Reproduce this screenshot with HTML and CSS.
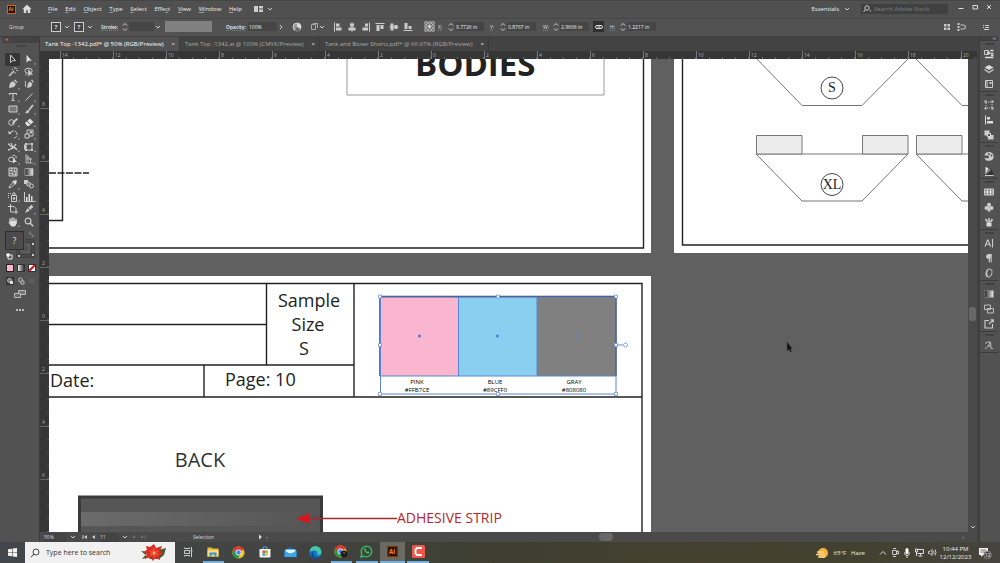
FILE: index.html
```html
<!DOCTYPE html>
<html lang="en">
<head>
<meta charset="utf-8">
<title>Tank Top -1342.pdf</title>
<link rel="stylesheet" href="styles.css">
</head>
<body>
<svg class="defs" aria-hidden="true">
  <symbol id="chev" viewBox="0 0 6 6"><path d="M1 2l2 2 2-2" fill="none" stroke="#ccc"/></symbol>
  <symbol id="step" viewBox="0 0 6 10"><path d="M1 3.5l2-2 2 2M1 6.5l2 2 2-2" fill="none" stroke="#ccc"/></symbol>
  <symbol id="chrome" viewBox="0 0 14 14"><circle cx="7" cy="7" r="6.5" fill="#fbc116"/><path d="M7 7L1.4 3.7A6.5 6.5 0 0 1 12.6 3.7z" fill="#e33b2e"/><path d="M7 7L1.4 3.7A6.5 6.5 0 0 0 6.6 13.5L9 9z" fill="#279847"/><path d="M7 4h5.8l-.2-.4A6.5 6.5 0 0 0 1.4 3.7L4.2 8z" fill="#e33b2e"/><circle cx="7" cy="7" r="3.1" fill="#fff"/><circle cx="7" cy="7" r="2.4" fill="#4285f4"/></symbol>
</svg>
<div class="app">
  <header class="menubar">
    <svg class="ai" viewBox="0 0 9 9"><rect x=".5" y=".5" width="8" height="8" fill="#2b0f00" stroke="#d1641c"/><text x="1.6" y="6.4" class="ai-text">Ai</text></svg>
    <button class="home" aria-label="Home"><svg width="10" height="10" viewBox="0 0 10 10"><path d="M5 .8L.4 5h1.4v4h2.4V6.3h1.6V9h2.4V5h1.4z" fill="#ddd"/></svg></button>
    <nav class="menus">
      <button><u>F</u>ile</button><button><u>E</u>dit</button><button><u>O</u>bject</button><button><u>T</u>ype</button><button><u>S</u>elect</button><button>Effe<u>c</u>t</button><button><u>V</u>iew</button><button><u>W</u>indow</button><button><u>H</u>elp</button>
    </nav>
    <button class="arrange" aria-label="Arrange documents"><svg width="9" height="6" viewBox="0 0 9 6"><path d="M0 0h4v6H0zM5 0h4v2.5H5zM5 3.5h4V6H5z" fill="#ccc"/></svg><svg width="6" height="6"><use href="#chev"/></svg></button>
    <span class="grow"></span>
    <button class="essentials">Essentials <svg width="6" height="6"><use href="#chev"/></svg></button>
    <label class="stock"><svg width="9" height="8" viewBox="0 0 9 8"><circle cx="4" cy="3" r="2.2" fill="none" stroke="#ccc"/><path d="M2.4 4.6L.6 7" stroke="#ccc"/><path d="M6.5 5.5h2l-1 1.2z" fill="#ccc"/></svg><input type="text" placeholder="Search Adobe Stock" aria-label="Search Adobe Stock"></label>
    <div class="winbtns">
      <button aria-label="Minimize"><svg width="8" height="8" viewBox="0 0 8 8"><path d="M1.500 5.500h5" stroke="#ddd"/></svg></button>
      <button aria-label="Maximize"><svg width="8" height="8" viewBox="0 0 8 8"><path d="M2 2.500h4.500v3.500H2z" fill="none" stroke="#ddd"/></svg></button>
      <button aria-label="Close"><svg width="8" height="8" viewBox="0 0 8 8"><path d="M2 2l4 4M6 2L2 6" stroke="#ddd"/></svg></button>
    </div>
  </header>

  <div class="control">
    <span>Group</span>
    <button class="q"><b>?</b><svg width="6" height="6"><use href="#chev"/></svg></button>
    <button class="q"><b>?</b><svg width="6" height="6"><use href="#chev"/></svg></button>
    <label for="stroke" class="dot strong">Stroke:</label>
    <div class="num"><svg width="6" height="10"><use href="#step"/></svg><input id="stroke" type="text" value=""><svg width="6" height="6"><use href="#chev"/></svg></div>
    <div class="profile"></div>
    <label for="op" class="dot strong">Opacity:</label>
    <div class="num"><input id="op" type="text" value="100%"><svg width="6" height="6" viewBox="0 0 6 6"><path d="M2 1l2 2-2 2" fill="none" stroke="#ccc"/></svg></div>
    <button aria-label="Recolor"><svg width="10" height="10" viewBox="0 0 10 10"><circle cx="5" cy="5" r="4" fill="#999" stroke="#ccc"/><path d="M5 5V1a4 4 0 0 1 3.500 6z" fill="#ddd"/><path d="M5 5l3.500 2A4 4 0 0 1 3 8.500z" fill="#666"/></svg></button>
    <button class="pair" aria-label="Align to"><svg width="8" height="8" viewBox="0 0 8 8"><path d="M1.500 1.500h4v5h-4zM3 .5h4.500V5" fill="none" stroke="#aaa"/></svg><svg width="6" height="6"><use href="#chev"/></svg></button>
    <div class="aligns">
      <button aria-label="Align left"><svg width="10" height="10" viewBox="0 0 10 10"><path d="M1 .5h1v9H1zM3 1.500h3.500v3H3zM3 5.500h5.500v3H3z" fill="#ccc"/></svg></button>
      <button aria-label="Align center"><svg width="10" height="10" viewBox="0 0 10 10"><path d="M4.500.5h1v9h-1zM3 1.500h4v3H3zM1.500 5.500h7v3h-7z" fill="#ccc"/></svg></button>
      <button aria-label="Align right"><svg width="10" height="10" viewBox="0 0 10 10"><path d="M8 .5h1v9H8zM4 1.500h3v3H4zM1.500 5.500H7v3H1.500z" fill="#ccc"/></svg></button>
      <button aria-label="Align top"><svg width="10" height="10" viewBox="0 0 10 10"><path d="M.5 1h9v1h-9zM1.500 3h3v6h-3zM5.500 3h3v4h-3z" fill="#ccc"/></svg></button>
      <button aria-label="Align middle"><svg width="10" height="10" viewBox="0 0 10 10"><path d="M.5 4.500h9v1h-9zM1.500 1.500h3v7h-3zM5.500 3h3v4h-3z" fill="#ccc"/></svg></button>
      <button aria-label="Align bottom"><svg width="10" height="10" viewBox="0 0 10 10"><path d="M.5 8h9v1h-9zM1.500 1h3v6h-3zM5.500 4h3v3h-3z" fill="#ccc"/></svg></button>
    </div>
    <button aria-label="Reference point"><svg width="11" height="11" viewBox="0 0 11 11"><path d="M2 2h7v7H2z" fill="none" stroke="#999" stroke-width=".8"/><path d="M.8.8h2.400v2.400H.8zM4.300.8h2.400v2.400H4.300zM7.800.8h2.400v2.400H7.800zM.8 4.300h2.400v2.400H.8zM7.800 4.300h2.400v2.400H7.800zM.8 7.800h2.400v2.400H.8zM4.300 7.800h2.400v2.400H4.300zM7.800 7.800h2.400v2.400H7.800z" fill="#525252" stroke="#ccc" stroke-width=".8"/><path d="M4.300 4.300h2.400v2.400H4.300z" fill="#fff"/></svg></button>
    <div class="num"><label for="x" class="dot">X:</label><svg width="6" height="10"><use href="#step"/></svg><input id="x" type="text" value="9.7726 in"></div>
    <div class="num"><label for="y" class="dot">Y:</label><svg width="6" height="10"><use href="#step"/></svg><input id="y" type="text" value="0.8767 in"></div>
    <div class="num"><label for="w" class="dot">W:</label><svg width="6" height="10"><use href="#step"/></svg><input id="w" type="text" value="2.9606 in"></div>
    <button class="link" aria-label="Constrain proportions"><svg width="8" height="4" viewBox="0 0 8 4"><rect x=".5" y=".5" width="7" height="3" rx="1.500" fill="none" stroke="#ddd"/><path d="M2.500 2h3" stroke="#ddd"/></svg></button>
    <div class="num"><label for="h" class="dot">H:</label><svg width="6" height="10"><use href="#step"/></svg><input id="h" type="text" value="1.2217 in"></div>
    <span></span>
    <div class="ctrl-right">
      <button aria-label="Isolate"><svg width="8" height="8" viewBox="0 0 8 8"><path d="M1 1h2.500v2.500H1zM4.500 1H7v2.500H4.500zM1 4.500h2.500V7H1zM4.500 4.500H7V7H4.500z" fill="#ccc"/></svg></button>
      <button aria-label="Snap"><svg width="9" height="8" viewBox="0 0 9 8"><path d="M1.500 0v8" stroke="#ccc" stroke-width="2" stroke-dasharray="2 1"/><path d="M3.500 2h3a2 2 0 0 1 0 4h-3" fill="none" stroke="#ccc"/></svg></button>
      <button aria-label="Panel menu"><svg width="8" height="8" viewBox="0 0 8 8"><path d="M1 2.500h1M3 2.500h4M1 4.500h1M3 4.500h4M2 6.500h5" stroke="#ccc"/></svg></button>
    </div>
  </div>

  <main class="work">
    <aside class="tools">
      <div class="tools-head">‹‹</div>
      <div class="grip"></div>
      <div class="tool-grid">
        <button class="on" aria-label="Selection"><svg viewBox="0 0 10 10"><path d="M2.500 1v7.500l2-1.800h3z" fill="none" stroke="#ccc"/></svg></button>
        <button class="more" aria-label="Direct selection"><svg viewBox="0 0 10 10"><path d="M2.500.8v8l2-2h3.300z" fill="#ddd"/></svg></button>
        <button aria-label="Magic wand"><svg viewBox="0 0 10 10"><path d="M1 9l5-5" stroke="#ccc" stroke-width="1.400"/><path d="M7 0v2M7 5v1.500M4 2l1 1M8.500 3.500H10M9 1l-.8.8" stroke="#ccc"/></svg></button>
        <button aria-label="Lasso"><svg viewBox="0 0 10 10"><ellipse cx="4.500" cy="3.800" rx="3.700" ry="2.600" fill="none" stroke="#ccc"/><path d="M4.500 2.500v6.500l1.600-1.500h2.400zM2 6v3" fill="#ccc" stroke="#ccc" stroke-width=".6"/></svg></button>
        <button class="more" aria-label="Pen"><svg viewBox="0 0 10 10"><path d="M1 9l1-5 3-2 3 3-2 3zM6 1.500L7 .5l2.500 2.500-1 1z" fill="#ccc"/></svg></button>
        <button aria-label="Curvature"><svg viewBox="0 0 10 10"><path d="M3 9l1-5 2-1.500 2.500 2.500L7 8zM7 1.500l1-1L9.800 3l-.8.800z" fill="#ccc"/><path d="M1 2c2 1-1 4 1 6" fill="none" stroke="#ccc"/></svg></button>
        <button class="more" aria-label="Type"><svg viewBox="0 0 10 10"><path d="M1.500 3V1.500h7V3M5 1.500v7M3.500 8.500h3" fill="none" stroke="#ccc" stroke-width="1.100"/></svg></button>
        <button class="more" aria-label="Line"><svg viewBox="0 0 10 10"><path d="M1.500 8.500l7-7" stroke="#ccc"/></svg></button>
        <button class="more" aria-label="Rectangle"><svg viewBox="0 0 10 10"><path d="M1 2h8v6H1z" fill="#777" stroke="#ccc"/></svg></button>
        <button class="more" aria-label="Paintbrush"><svg viewBox="0 0 10 10"><path d="M9 1L5 6" stroke="#ccc" stroke-width="1.800"/><path d="M1 9c2-1 1-3 3-3l1.300 1c0 2-2 2.500-4.300 2z" fill="#ccc"/></svg></button>
        <button class="more" aria-label="Shaper"><svg viewBox="0 0 10 10"><circle cx="3.500" cy="5.500" r="2.800" fill="none" stroke="#ccc"/><path d="M4 7l.5-1.800L8.500 1 10 2.300 5.800 6.500z" fill="#ccc"/></svg></button>
        <button class="more" aria-label="Eraser"><svg viewBox="0 0 10 10"><path d="M1 6l5-4.500L9.500 5 5 9H3z" fill="#ddd"/><path d="M3 4l3.500 3.500" stroke="#666"/></svg></button>
        <button class="more" aria-label="Rotate"><svg viewBox="0 0 10 10"><path d="M2 4.500A3.600 3.600 0 1 1 6 9" fill="none" stroke="#ccc" stroke-dasharray="5 1"/><path d="M0 2l1 3.500L4 4z" fill="#ccc"/></svg></button>
        <button class="more" aria-label="Scale"><svg viewBox="0 0 10 10"><path d="M1 5h4v4H1zM3 5V1h6v6H5M5 5l2.500-2.500M5.500 2.500h2v2" fill="none" stroke="#ccc"/></svg></button>
        <button class="more" aria-label="Width"><svg viewBox="0 0 10 10"><path d="M0 2c2 0 2 3 4 3s3 0 5 3M0 8c2 0 4-2 5-2M3 1l2 5 3-4" fill="none" stroke="#ccc" stroke-width="1.300"/></svg></button>
        <button class="more" aria-label="Free transform"><svg viewBox="0 0 10 10"><path d="M2 2h6v6H2z" fill="none" stroke="#ccc"/><path d="M1 1h2v2H1zM7 1h2v2H7zM7 7h2v2H7zM1 7h2v2H1zM0 2v6l3-3z" fill="#ccc"/></svg></button>
        <button class="more" aria-label="Shape builder"><svg viewBox="0 0 10 10"><ellipse cx="3.500" cy="5.500" rx="3" ry="2.200" fill="none" stroke="#ccc"/><path d="M4 2.500a2 2 0 0 1 4 2" fill="none" stroke="#ccc"/><path d="M5 4v5.500l1.500-1.500H9z" fill="#ddd"/></svg></button>
        <button class="more" aria-label="Perspective grid"><svg viewBox="0 0 10 10"><path d="M2 0v9h7M2 2l5 3M2 5h6M4 1.500V9M6.500 4v5" fill="none" stroke="#bbb" stroke-width=".9"/></svg></button>
        <button aria-label="Mesh"><svg viewBox="0 0 10 10"><path d="M1 1h8v8H1z" fill="#666" stroke="#ccc"/><path d="M1 4c3-2 5 2 8 0M1 7c3-2 5 2 8 0M4 1c-2 3 2 5 0 8M7 1c-2 3 2 5 0 8" fill="none" stroke="#ccc" stroke-width=".8"/></svg></button>
        <button aria-label="Gradient"><svg viewBox="0 0 10 10"><defs><linearGradient id="g"><stop stop-color="#222"/><stop offset="1" stop-color="#eee"/></linearGradient></defs><path d="M1 1.500h8v7H1z" fill="url(#g)" stroke="#bbb" stroke-width=".7"/></svg></button>
        <button class="more" aria-label="Eyedropper"><svg viewBox="0 0 10 10"><path d="M1 9l1-2.500L5.500 3 7 4.500 3.500 8z" fill="none" stroke="#ccc"/><path d="M5 2l3 3M6.500 3.500l2-2" stroke="#ddd" stroke-width="1.900"/></svg></button>
        <button aria-label="Blend"><svg viewBox="0 0 10 10"><path d="M0 1h4v4H0z" fill="#ccc"/><circle cx="4.500" cy="5" r="2" fill="#777" stroke="#ccc"/><circle cx="7.500" cy="7" r="2" fill="#555" stroke="#ccc"/></svg></button>
        <button class="more" aria-label="Symbol sprayer"><svg viewBox="0 0 10 10"><path d="M3.500 3.500h5v6h-5zM5 3V1h2v2" fill="none" stroke="#ccc"/><path d="M0 1h1v1H0zM2 1h1v1H2zM0 3h1v1H0zM0 5h1v1H0z" fill="#ccc"/><circle cx="6" cy="6.500" r="1.300" fill="#ccc"/></svg></button>
        <button class="more" aria-label="Column graph"><svg viewBox="0 0 10 10"><path d="M.5 0v9.500H10" fill="none" stroke="#ccc"/><path d="M2 5h1.500v4H2zM4.500 2H6v7H4.500zM7 4h1.500v5H7z" fill="#ddd"/></svg></button>
        <button aria-label="Artboard"><svg viewBox="0 0 10 10"><path d="M2.500 0v8H10M0 2.500h6L8 4.500V10" fill="none" stroke="#ccc"/></svg></button>
        <button class="more" aria-label="Slice"><svg viewBox="0 0 10 10"><path d="M1 9l2-4L7.500.8 9.300 3 5 7z" fill="#ccc"/><path d="M4 4l2 2" stroke="#555"/></svg></button>
        <button class="more" aria-label="Hand"><svg viewBox="0 0 10 10"><path d="M2 5V2M4 5V1M6 5V1.200M8 5.500V2.500" stroke="#ddd" stroke-width="1.300" stroke-linecap="round"/><path d="M0 5l2 .8V4h6.700v2.500L7 9.500H3.500z" fill="#ddd"/></svg></button>
        <button aria-label="Zoom"><svg viewBox="0 0 10 10"><circle cx="4" cy="4" r="2.900" fill="none" stroke="#ccc" stroke-width="1.200"/><path d="M6 6l3.200 3.200" stroke="#ccc" stroke-width="1.500"/></svg></button>
      </div>
      <svg class="fillstroke" viewBox="0 0 36 30"><path d="M16 14v12h15V11h-8" fill="none" stroke="#333" stroke-width="3"/><path d="M16 14v12h15V11h-8M20 17v5h7v-7h-4" fill="none" stroke="#777" stroke-width=".7"/><rect x="3.500" y="1.500" width="18" height="18" fill="#4b4b4b" stroke="#303030"/><text x="12.500" y="14">?</text><path d="M27 3q4 0 4 4M29 1.500L27 3l2 1.500M29.500 5.500L31 7l1.500-1.500" fill="none" stroke="#888" stroke-width=".8"/><path d="M30 13h2v2h-2zM30 24h2v2h-2zM16 25h2v2h-2z" fill="#ccc"/><rect x="4" y="23" width="4" height="4" fill="#fff" stroke="#222" stroke-width=".6"/><path d="M6 25h4v4H6z" fill="none" stroke="#eee"/></svg>
      <div class="modes">
        <button class="pinkbtn" aria-label="Color"></button><button class="gradbtn" aria-label="Gradient fill"></button><button class="nonebtn" aria-label="None"></button>
        <button class="on" aria-label="Draw normal"><svg viewBox="0 0 8 8"><circle cx="3.500" cy="3.500" r="2" fill="#777" stroke="#bbb"/><path d="M4 4h3v3H4z" fill="#ddd"/></svg></button>
        <button aria-label="Draw behind"><svg viewBox="0 0 8 8"><circle cx="3.500" cy="3" r="2" fill="none" stroke="#bbb"/><path d="M4 4h3v3H4z" fill="#555" stroke="#bbb"/></svg></button>
        <button aria-label="Draw inside"><svg viewBox="0 0 8 8"><circle cx="4" cy="4" r="2" fill="#5c5c5c" stroke="#666"/></svg></button>
      </div>
      <button class="screen" aria-label="Screen mode"><svg width="12" height="10" viewBox="0 0 12 10"><path d="M4.500 1.500h7v4h-7z" fill="#777" stroke="#bbb"/><path d="M.5 4.500h6v4h-6z" fill="#666" stroke="#bbb"/></svg></button>
      <button class="dots" aria-label="Edit toolbar"><svg width="10" height="4" viewBox="0 0 10 4"><path d="M1 1h2v2H1zM4 1h2v2H4zM7 1h2v2H7z" fill="#bbb"/></svg></button>
    </aside>

    <section class="document">
      <div class="tabs">
        <div class="tab active"><button>Tank Top -1342.pdf* @ 50% (RGB/Preview)</button><button class="x" aria-label="Close tab">×</button></div>
        <div class="tab"><button>Tank Top -1342.ai @ 100% (CMYK/Preview)</button><button class="x" aria-label="Close tab">×</button></div>
        <div class="tab"><button>Tank and Boxer Shorts.pdf* @ 66.67% (RGB/Preview)</button><button class="x" aria-label="Close tab">×</button></div>
      </div>
      <div class="view">
        <div class="hruler"><span>14</span><span>12</span><span>10</span><span>8</span><span>6</span><span>4</span><span>2</span><span>0</span><span>2</span><span>4</span><span>6</span><span>8</span><span>10</span><span>12</span><span>14</span><span>16</span><span>18</span><span>20</span></div>
        <div class="vruler"><span class="first">8</span><span>6</span><span>4</span><span>2</span><span>0</span><span>2</span><span>4</span><span>6</span><span></span></div>
        <div class="canvas">
          <svg class="art" width="919" height="473" viewBox="49 59 919 473">
            <defs><linearGradient id="strip" x1="0" x2="1" y1="0" y2="0"><stop stop-color="#6b6b6b"/><stop offset="1" stop-color="#555"/></linearGradient></defs>
            <path d="M0 0h651v253H0zM674 0h400v253H674zM0 276h651v300H0z" fill="#fff"/>
            <g fill="none" stroke="#222" stroke-width="1.400">
              <path d="M643.500 50v198H40M40 220.500h22.500V50"/>
              <path d="M49 173h40" stroke-dasharray="7 1.500"/>
              <path d="M682.500 50v195H980"/>
              <path d="M40 283.500h602V540M40 397h602M40 324.500h226M40 365h314M266.500 283v82M354 283v114M204 365v32"/>
            </g>
            <path d="M347 50v45h257V50" fill="none" stroke="#999"/>
            <text x="415" y="76" class="bodies">BODIES</text>
            <g fill="none" stroke="#777">
              <path d="M755 57l47 48.500h60L910 57M914 57l48 48.500h20M756 154l46 47h60l46-47zM916 154h70M916 154l46 47h20"/>
              <path d="M756.500 135.500H802V154h-45.500zM862.500 135.500H908V154h-45.500zM916.500 135.500H962V154h-45.500z" fill="#ececec"/>
              <g stroke="#444"><circle cx="832" cy="88" r="11"/><circle cx="832" cy="184.500" r="11"/></g>
            </g>
            <text x="832" y="92" class="serif">S</text>
            <text x="832" y="189" class="serif">XL</text>
            <g class="myriad">
              <text x="309" y="307" class="mid">Sample</text><text x="308" y="331" class="mid">Size</text><text x="304" y="355" class="mid">S</text>
              <text x="50" y="387">Date:</text><text x="225" y="386">Page: 10</text>
            </g>
            <text x="200" y="467" class="back mid">BACK</text>
            <rect x="79.500" y="497" width="242" height="60" fill="#565656" stroke="#3a3a3a" stroke-width="3"/>
            <path d="M81 512h239v14H81z" fill="url(#strip)"/>
            <path d="M305 518.500h92" stroke="#a5282c" stroke-width="1.300"/><path d="M296 518.500l13-5v10z" fill="#d8141c"/>
            <text x="397" y="523" class="adhesive">ADHESIVE STRIP</text>
            <path d="M380 297h78.500v79H380z" fill="#f9b6ce"/><path d="M458.500 297H537v79h-78.500z" fill="#89cff0"/><path d="M537 297h79v79h-79z" fill="#808080"/>
            <path d="M380 376v-79.500h236V376" fill="none" stroke="#445" stroke-width="1.500"/>
            <path d="M380.500 297h235.500v97H380.500zM380 376h236M458.500 297v79M537 297v79M616 345h7" fill="none" stroke="#5b85d6"/>
            <g class="swname"><text x="417" y="384">PINK</text><text x="417" y="392">#FFB7CE</text><text x="495" y="384">BLUE</text><text x="495" y="392">#89CFF0</text><text x="574" y="384">GRAY</text><text x="574" y="392">#808080</text></g>
            <g fill="#fff" stroke="#6f93d8" stroke-width=".8"><path d="M378.500 295h3v3h-3zM496.500 295h3v3h-3zM614.500 295h3v3h-3zM378.500 343.500h3v3h-3zM614.500 343.500h3v3h-3zM378.500 392.500h3v3h-3zM496.500 392.500h3v3h-3zM614.500 392.500h3v3h-3z"/><circle cx="625.500" cy="345" r="2"/></g>
            <g fill="#4a7bd6"><circle cx="419.500" cy="336" r="1.500"/><circle cx="497.500" cy="336" r="1.500"/><circle cx="576.500" cy="336" r="1.200"/></g>
            <path d="M787 342v9l2-1.700 1.300 2.700 1.300-.7-1.200-2.600h2z" fill="#111" stroke="#444" stroke-width=".4"/>
          </svg>
        </div>
        <div class="vscroll"><i></i><svg width="6" height="6"><use href="#chev"/></svg></div>
        <div class="status">
          <input class="zoomv" type="text" value="50%" aria-label="Zoom"><svg width="6" height="6"><use href="#chev"/></svg>
          <button class="first-board" aria-label="First artboard"><svg width="6" height="6" viewBox="0 0 6 6"><path d="M1 1v4" stroke="#ccc"/><path d="M5 1v4L2 3z" fill="#ccc"/></svg></button>
          <button aria-label="Previous artboard"><svg width="6" height="6" viewBox="0 0 6 6"><path d="M4 1v4L1 3z" fill="#ccc"/></svg></button>
          <input class="board" type="text" value="11" aria-label="Artboard"><svg width="6" height="6"><use href="#chev"/></svg>
          <button aria-label="Next artboard"><svg width="6" height="6" viewBox="0 0 6 6"><path d="M2 1v4l3-2z" fill="#686868"/></svg></button>
          <button aria-label="Last artboard"><svg width="6" height="6" viewBox="0 0 6 6"><path d="M1 1v4l3-2zM4.500 1h1v4h-1z" fill="#686868"/></svg></button>
          <span class="toolname">Selection</span>
          <button aria-label="Status menu"><svg width="6" height="6" viewBox="0 0 6 6"><path d="M2 .5v5L5 3z" fill="#ddd"/></svg></button>
          <div class="hscroll"><span>‹</span><i></i><span>›</span></div>
        </div>
      </div>
    </section>

    <aside class="dock">
      <div class="dock-head">‹‹</div>
      <div class="dgroup">
        <button aria-label="Properties"><svg viewBox="0 0 10 10"><path d="M.5 1.500h4v4h-4z" fill="none" stroke="#ccc"/><circle cx="4.500" cy="4" r="1.800" fill="#ccc"/><path d="M6.500 1.500h3M6.500 4.500h3M1 8.500h8.500M7 6.500h2.500" stroke="#ddd" stroke-width="1.300"/></svg></button>
        <button aria-label="Layers"><svg viewBox="0 0 10 10"><path d="M5 1l4.500 2.500L5 6 .5 3.500z" fill="#ddd"/><path d="M.5 5.500L5 8.500l4.500-3" fill="none" stroke="#ccc" stroke-width="1.300"/></svg></button>
        <button aria-label="Libraries"><svg viewBox="0 0 10 10"><path d="M1.500 1.500h7v7h-7zM3 1.500v7" fill="none" stroke="#ccc"/><path d="M5.500 3h2v2h-2z" fill="#ccc"/></svg></button>
      </div>
      <div class="dgroup">
        <button aria-label="Transform"><svg viewBox="0 0 10 10"><path d="M2 2h6v6H2z" fill="none" stroke="#ccc" stroke-dasharray="1 1"/><path d="M.5.5h2v2h-2zM7.500.5h2v2h-2zM.5 7.500h2v2h-2zM7.500 7.500h2v2h-2z" fill="#ccc"/></svg></button>
        <button aria-label="Align"><svg viewBox="0 0 10 10"><path d="M1 .5h1v9H1zM3 2h3v2.500H3zM3 6h6v2.500H3z" fill="#ddd"/></svg></button>
        <button aria-label="Pathfinder"><svg viewBox="0 0 10 10"><path d="M.5.5h5v5h-5zM5 5h4.500v4.500H4V5z" fill="#ccc"/><path d="M3.500 3.500h3v3h-3z" fill="#555" stroke="#ddd"/></svg></button>
      </div>
      <div class="dgroup">
        <button aria-label="Color"><svg viewBox="0 0 10 10"><path d="M.5 4.500h2.500a2 1.300 0 0 1 2 1.500q0 1.500-2 1.200L.5 7a4.600 3.800 0 0 0 9-1.500A4.500 4 0 0 0 .5 4.500z" fill="#ccc"/><circle cx="5" cy="3" r=".9" fill="#444"/><circle cx="7.500" cy="4.500" r=".9" fill="#444"/></svg></button>
        <button aria-label="Color guide"><svg viewBox="0 0 10 10"><path d="M1.500 9V1a8 8 0 0 1 8 8z" fill="#333"/><path d="M1.500 9V1l3 1z" fill="#eee"/><path d="M1.500 9l3-7L7 4z" fill="#888"/><path d="M1 9.500h8.500" stroke="#ccc"/></svg></button>
      </div>
      <div class="dgroup">
        <button aria-label="Swatches"><svg viewBox="0 0 10 10"><path d="M.5 2h9v6h-9z" fill="#888" stroke="#ccc"/><path d="M3.500 2v6M6.500 2v6M1 5h8" stroke="#ddd"/></svg></button>
        <button aria-label="Symbols"><svg viewBox="0 0 10 10"><circle cx="5" cy="2.700" r="2" fill="#ccc"/><circle cx="2.500" cy="6" r="2" fill="#ccc"/><circle cx="7.500" cy="6" r="2" fill="#ccc"/><path d="M4.500 4h1l1 5.500h-3z" fill="#ccc"/></svg></button>
        <button aria-label="Brushes"><svg viewBox="0 0 10 10"><path d="M2.500 5.500h5v4h-5z" fill="#ddd"/><path d="M5 6V1M3.500 5L1.500 2M6.500 5l2-3" stroke="#ccc" stroke-width="1.600"/></svg></button>
      </div>
      <div class="dgroup">
        <button aria-label="Character"><svg viewBox="0 0 10 10"><path d="M1 8.500L3.500 2h.6l2.400 6.500M2 6.200h3.600M8.500 1v8.500" fill="none" stroke="#ccc" stroke-width="1.100"/></svg></button>
        <button aria-label="Paragraph"><svg viewBox="0 0 10 10"><path d="M7.500 1.500H4.500a2 2 0 0 0 0 4h.8v4M7.200 1.500v8" fill="#ccc" stroke="#ccc"/></svg></button>
        <button aria-label="OpenType"><svg viewBox="0 0 10 10"><ellipse cx="5" cy="5" rx="2.800" ry="4" transform="rotate(18 5 5)" fill="none" stroke="#bbb"/><path d="M3.500 2Q1.500 5 3.500 8.500" fill="none" stroke="#ccc" stroke-width="1.300"/></svg></button>
      </div>
      <div class="dgroup">
        <button aria-label="Gradient"><svg viewBox="0 0 10 10"><path d="M.5 1.500h9v7h-9z" fill="url(#g)" stroke="#888" stroke-width=".6"/></svg></button>
        <button aria-label="Transparency"><svg viewBox="0 0 10 10"><path d="M.5 1h6v4.500h-6zM3.500 4.500h6V9h-6z" fill="none" stroke="#bbb"/></svg></button>
        <button aria-label="Asset export"><svg viewBox="0 0 10 10"><path d="M5 1.500H1v7.500h7.500V5M5 5l4-4M6.500.7h2.800v2.800" fill="none" stroke="#ccc" stroke-width="1.100"/></svg></button>
      </div>
      <div class="dgroup">
        <button aria-label="Glyphs"><svg viewBox="0 0 10 10"><path d="M1 8q1.500.8 2.500-.8L6.500 2H4Q1.500 2 1.500 4M6.500 2L7 8.500h2M3.500 6h3.500" fill="none" stroke="#bbb"/></svg></button>
      </div>
    </aside>
  </main>

  <footer class="taskbar">
    <button class="start" aria-label="Start"><svg width="9" height="9" viewBox="0 0 9 9"><path d="M0 1.200L4 .7v3.500H0zM4.600.6L9 0v4.200H4.600zM0 4.800h4v3.500l-4-.5zM4.600 4.800H9V9l-4.400-.6z" fill="#f2f2f2"/></svg></button>
    <label class="search"><svg width="10" height="10" viewBox="0 0 10 10"><circle cx="6" cy="4" r="3" fill="none" stroke="#333" stroke-width=".9"/><path d="M4 6L1 9.300" stroke="#333"/></svg><input type="text" placeholder="Type here to search" aria-label="Type here to search">
      <svg width="28" height="18" viewBox="0 0 28 18"><path d="M1 7l7 1-6 7 8-2 5-6 11-3-2 7-5 4-9 0z" fill="#3e5f33"/><path d="M14 0l2 4 6-2-2 5 4 3-5 1 1 5-5-2-2 3-3-4-5 2 2-5-4-2 4-2-1-4 4 1z" fill="#d92b22"/><path d="M14 3l1 4 4-1-2 3 3 3-4-1-2 4-1-4-4 1 2-3-3-3 4 1z" fill="#f2503c"/><circle cx="14" cy="9" r="1.300" fill="#e9c840"/></svg></label>
    <div class="apps">
      <button aria-label="Task view"><svg width="10" height="10" viewBox="0 0 10 10"><path d="M1.500 3.500h5v3h-5zM1.500.5v1h5v-1M1.500 9.500v-1h5v1M8.500 0v10M7.500 4h2" fill="none" stroke="#ccc"/></svg></button>
      <button class="run" aria-label="File Explorer"><svg width="12" height="12" viewBox="0 0 12 12"><path d="M.5 1.500h4l1 1h6v8H.5z" fill="#e9b93a"/><path d="M.5 4h11v6.500H.5z" fill="#fcdc7a"/><path d="M2.500 10.500v-4h7v4H7.500v-2h-3v2z" fill="#3b92d2"/></svg></button>
      <button aria-label="Chrome"><svg width="13" height="13"><use href="#chrome"/></svg></button>
      <button aria-label="Store"><svg width="12" height="12" viewBox="0 0 12 12"><path d="M4 3V1h4v2" fill="none" stroke="#4ba7e0"/><path d="M.5 3h11v7.500q0 1-1 1h-9q-1 0-1-1z" fill="#f4f4f4"/><path d="M3.500 4.500H6V7H3.500z" fill="#e5532a"/><path d="M6.300 4.500h2.400V7H6.300z" fill="#7fba00"/><path d="M3.500 7.300H6v2.400H3.500z" fill="#1e9fe0"/><path d="M6.300 7.300h2.400v2.400H6.300z" fill="#fcb714"/></svg></button>
      <button aria-label="Mail"><svg width="13" height="12" viewBox="0 0 13 12"><path d="M.5 4.500l6-4 6 4V11H.5z" fill="#1267b4"/><path d="M1.500 3.500h10v4h-10z" fill="#e8f4fc"/><path d="M.5 4.500l6 3.500 6-3.500V11H.5z" fill="#38a8ee"/></svg></button>
      <button aria-label="Edge"><svg width="13" height="13" viewBox="0 0 13 13"><circle cx="6.500" cy="6.500" r="6" fill="#1479cf"/><path d="M.5 6A6 6 0 0 1 12.500 6c0 3-4 3.500-4.500 2 1.500-2-.5-4-3-3.500C3 5 1 5 .5 6z" fill="#45c8a0"/><path d="M4.500 7c0 3 3 5 6.500 3.500C8 14 2 13 2 9c0-2 1-3.500 3-4.300-.3.700-.5 1.300-.5 2.300z" fill="#0d529f"/></svg></button>
      <button class="run" aria-label="Chrome profile"><svg width="14" height="13" viewBox="0 0 14 13"><use href="#chrome" width="13" height="13"/><circle cx="10" cy="9" r="3.500" fill="#1d1d1d"/><path d="M8.500 8l2-1 .5 2z" fill="#96705a"/></svg></button>
      <button class="run" aria-label="WhatsApp"><svg width="13" height="13" viewBox="0 0 13 13"><path d="M1 12l.8-3A5.300 5.300 0 1 1 4 11.200z" fill="none" stroke="#31c463" stroke-width="1.300"/><path d="M4.500 3.500c-1.500 2 2 5.700 4.500 5l.5-1.500-1.500-.7-.8.700-1.700-1.700.6-.8L5.500 3z" fill="#31c463"/></svg></button>
      <button class="run sel" aria-label="Illustrator"><svg width="11" height="11" viewBox="0 0 9 9"><rect x=".5" y=".5" width="8" height="8" fill="#2b0f00" stroke="#7a3308"/><text x="1.600" y="6.400" class="ai-text">Ai</text></svg></button>
      <button class="run" aria-label="Camtasia"><svg width="13" height="13" viewBox="0 0 13 13"><rect width="13" height="13" rx="1.500" fill="#ef5548"/><path d="M10 3H5L3.500 4.500v4L5 10h5" fill="none" stroke="#fff" stroke-width="1.900"/></svg></button>
    </div>
    <span class="grow"></span>
    <button class="weather"><svg width="13" height="12" viewBox="0 0 13 12"><circle cx="7" cy="6" r="5" fill="#f6b13c"/><path d="M1 5h7M0 7.500h9M2 10h7" stroke="#f9d48a" stroke-width="1.300"/></svg><span>65°F</span><span>Haze</span></button>
    <div class="tray">
      <button aria-label="Show hidden icons"><svg width="8" height="8" viewBox="0 0 8 8"><path d="M1 5.500l3-3 3 3" fill="none" stroke="#ddd"/></svg></button>
      <button aria-label="Meet now"><svg width="8" height="9" viewBox="0 0 8 9"><path d="M1.500 2.500h4v4h-4zM5.500 4l2-1v3l-2-1M2 .5h3M2 8.500h3" fill="none" stroke="#ccc"/></svg></button>
      <button aria-label="Microphone"><svg width="8" height="10" viewBox="0 0 8 10"><rect x="2.500" y="0" width="3" height="6" rx="1.500" fill="#fff"/><path d="M1.500 4.500q0 3 2.500 3t2.500-3M4 7v3" fill="none" stroke="#ddd"/></svg></button>
      <button aria-label="Network"><svg width="9" height="9" viewBox="0 0 9 9"><path d="M2.500 1.500h6v4h-6M5.500 5.500v2M3.500 8h4M.5 1v3h2V1zM1.500 4v4" fill="none" stroke="#ddd"/></svg></button>
      <button aria-label="Volume"><svg width="9" height="9" viewBox="0 0 9 9"><path d="M.5 3.500H2L4 1.500v6l-2-2H.5zM5.500 3q1 1.500 0 3M7 1.500q2 3 0 6" fill="none" stroke="#ddd" stroke-width=".9"/></svg></button>
    </div>
    <button class="clock"><span>10:44 PM</span><span>12/12/2023</span></button>
    <button class="notif" aria-label="Notifications"><svg width="14" height="12" viewBox="0 0 14 12"><path d="M1 1h9v7H5L3 10V8H1z" fill="#f2f2f2"/><path d="M2.500 3h6M2.500 5h6" stroke="#555" stroke-width=".8"/><circle cx="9.500" cy="8" r="3.800" fill="#444" stroke="#aaa" stroke-width=".6"/><text x="9.500" y="10">12</text></svg></button>
  </footer>
</div>
</body>
</html>
```
FILE: styles.css
```css
* { box-sizing: border-box; }
body { margin: 0; font: 6px/8px "Open Sans", "Noto Sans", sans-serif; color: #ddd; background: #525252; overflow: hidden; }
button, input { font: inherit; color: inherit; background: none; border: 0; padding: 0; margin: 0; min-width: 0; }
button { display: flex; align-items: center; justify-content: center; white-space: nowrap; }
svg { display: block; flex: none; }
u { text-underline-offset: 1px; text-decoration-thickness: 1px; text-decoration-color: #999; }
.defs { position: absolute; width: 0; height: 0; }
.grow { flex: 1; }
.app { height: 100vh; display: flex; flex-direction: column; }

.menubar { height: 18px; display: flex; align-items: center; padding: 0 2px 1px 7px; background: #505050; border-top: 1px solid #464646; }
.ai { width: 9px; height: 9px; }
.ai-text { font: bold 5px "Open Sans", sans-serif; fill: #f08a2c; }
.home { margin: 0 16px 0 6px; }
.menus { display: flex; justify-content: space-between; width: 194px; }
.menus, .essentials { color: #eee; }
.arrange { margin-left: 12px; gap: 4px; }
.essentials { gap: 5px; margin-right: 11px; }
.stock { display: flex; align-items: center; gap: 2px; width: 87px; height: 10px; padding-left: 2px; background: #404040; }
.stock input { flex: 1; }
.stock input::placeholder { color: #808080; opacity: 1; }
.winbtns { display: flex; gap: 6px; padding: 0 5px 5px 9px; }

.control { height: 18px; display: grid; align-items: center; padding: 0 0 2px 9px; background: #525252; border-top: 1px solid #484848; font-size: 5px;
  grid-template-columns: 42px 23px 27px 21px 39px 65px 22px 42px 14px 27px 89px 18px 52px 53px 49px 18px 50px 1fr 64px; }
.dot { text-decoration: underline dotted #888 1px; text-underline-offset: 1px; }
.strong { color: #eee; font-weight: 600; }
.q { justify-content: flex-start; gap: 3px; }
.q b { width: 10px; height: 10px; border: 1px solid #ccc; font-size: 6px; line-height: 8px; background: #444; }
.num { display: flex; align-items: center; gap: 1px; }
.num input { width: 29px; height: 9px; background: #454545; padding-left: 1px; color: #eee; }
.num label { width: 9px; }
.profile { width: 47px; height: 11px; margin-left: 4px; background: #808080; }
.pair { gap: 1px; }
.aligns { display: flex; gap: 4px; padding-left: 2px; }
.link { width: 11px; height: 11px; margin-left: 1px; background: #303030; }
.ctrl-right { display: flex; align-items: center; gap: 6px; padding-left: 7px; }
.ctrl-right button:last-child { margin-left: 10px; }

.work { flex: 1; min-height: 0; display: flex; background: #434343; }
.tools { width: 40px; padding-left: 2px; background: #525252; border-right: 1px solid #3c3c3c; border-top: 1px solid #3c3c3c; }
.tools-head { height: 6px; line-height: 5px; padding-left: 3px; background: #434343; }
.grip { height: 10px; width: 10px; margin: 0 auto; background: linear-gradient(#444, #444) 0 2px / 10px 2px no-repeat; }
.tool-grid { height: 175px; display: grid; grid-template-columns: 15px 15px; grid-auto-rows: 1fr; padding-left: 3px; gap: 0 1px; }
.tool-grid svg { width: 10px; height: 10px; }
.on { background: #363636; }
.more::after { content: ""; align-self: flex-end; width: 2px; height: 2px; margin: 0 -2px 1px 0; background: #aaa; clip-path: polygon(100% 0, 100% 100%, 0 100%); }
.fillstroke { width: 36px; height: 30px; margin-top: 2px; fill: #ddd; font-size: 9px; text-anchor: middle; }
.modes { display: grid; grid-template-columns: repeat(3, 8px); grid-auto-rows: 8px; gap: 5px 3px; padding: 4px 0 0 4px; }
.modes svg { width: 8px; height: 8px; }
.pinkbtn { background: #f9b6ce; border: 1px solid #222; }
.gradbtn { background: linear-gradient(90deg, #eee, #333); border: 1px solid #333; }
.nonebtn { background: linear-gradient(135deg, #fff 38%, #e02020 38% 62%, #fff 62%); border: 1px solid #333; }
.screen { margin: 4px 0 0 12px; }
.dots { margin: 9px 0 0 13px; }

.document { flex: 1; min-width: 0; display: flex; flex-direction: column; padding-right: 2px; }
.tabs { display: flex; height: 15px; padding-top: 1px; }
.tab { display: flex; align-items: center; gap: 8px; padding: 0 4px 0 5px; color: #aaa; border-right: 1px solid #3b3b3b; }
.tab.active { background: #525252; color: #fff; }
.x { font-weight: 700; color: #ccc; }
.view { flex: 1; min-height: 0; display: grid; grid-template: 8px 1fr 10px / 9px 1fr 9px; }
.hruler { grid-column: 1 / -1; display: flex; padding-left: 20px; overflow: hidden; background: #363636; color: #aaa; font-size: 5px; }
.hruler span { flex: 0 0 53px; border-left: 1px solid #777; padding-left: 1px; background: repeating-linear-gradient(90deg, transparent 0 12px, #666 12px 13px) 0 100% / 100% 2px no-repeat; }
.vruler { overflow: hidden; background: #363636; color: #aaa; font-size: 5px; display: flex; flex-direction: column; }
.vruler span { flex: 0 0 53px; display: flex; align-items: flex-end; padding-left: 2px; border-bottom: 1px solid #666; background: repeating-linear-gradient(transparent 0 12px, #555 12px 13px) 100% 0 / 2px 100% no-repeat; }
.vruler .first { flex-basis: 50px; }
.canvas { overflow: hidden; background: #606060; min-width: 0; min-height: 0; }
.vscroll { background: #4a4a4a; display: flex; flex-direction: column; align-items: center; justify-content: space-between; padding: 248px 0 2px; }
.vscroll i { width: 7px; height: 14px; border-radius: 3px; background: #686868; }
.status { grid-column: 1 / -1; display: flex; align-items: center; gap: 3px; padding-left: 4px; background: #4a4a4a; font-size: 5px; }
.status .zoomv { width: 23px; }
.status .zoomv, .status .board { height: 9px; background: #444; }
.status .board { width: 19px; }
.first-board { padding-left: 3px; }
.toolname { margin-left: 44px; width: 61px; }
.hscroll { flex: 1; display: flex; align-items: center; justify-content: space-between; padding-right: 13px; }
.hscroll i { width: 14px; height: 8px; margin-right: 18px; border-radius: 4px; background: #686868; }

.dock { width: 21px; padding-right: 2px; background: #525252; border-left: 1px solid #3c3c3c; }
.dock-head { height: 4px; line-height: 4px; text-align: right; background: #434343; padding-right: 2px; }
.dgroup { border-top: 1px solid #3c3c3c; padding-top: 5px; background: linear-gradient(#404040, #404040) 50% 2px / 9px 2px no-repeat; }
.dgroup:last-child { border-bottom: 1px solid #3c3c3c; }
.dgroup button { width: 100%; height: 15px; }
.dgroup svg { width: 10px; height: 10px; }

.bodies { font: bold 33px "Open Sans", sans-serif; fill: #222; }
.serif { font: 14px "Liberation Serif", serif; fill: #222; text-anchor: middle; }
.myriad { font: 18px "Open Sans", sans-serif; fill: #222; }
.back { font: 20px "Open Sans", sans-serif; fill: #333; }
.adhesive { font: 14px "Open Sans", sans-serif; fill: #b8252b; }
.mid { text-anchor: middle; }
.swname { font: 6px "Open Sans", sans-serif; fill: #000; text-anchor: middle; }

.taskbar { height: 21px; display: flex; align-items: stretch; color: #f0f0f0; background: linear-gradient(90deg, #43464a, #424341 30%, #3e3f31 50%, #45402f 70%, #42412f 85%, #45443f); }
.start { width: 25px; }
.search { display: flex; align-items: center; width: 150px; padding: 0 7px 0 5px; gap: 6px; background: #f1f1f1; color: #333; font-size: 7px; }
.search input { flex: 1; }
.search input::placeholder { color: #333; opacity: 1; }
.apps { display: grid; grid-template-columns: repeat(10, 1fr); width: 256px; }
.apps button { margin: 0 2px; border-bottom: 1px solid transparent; }
.apps .run { border-bottom: 2px solid #76b2e0; }
.apps .sel { margin: 0; background: #6a6962; }
.weather { gap: 5px; margin-right: 14px; }
.tray { display: flex; gap: 4px; margin-right: 2px; }
.clock { flex-direction: column; align-items: center; width: 33px; }
.notif { margin: 0 8px 0 6px; }
.notif text { font: 5px "Open Sans", sans-serif; fill: #fff; text-anchor: middle; }
```
